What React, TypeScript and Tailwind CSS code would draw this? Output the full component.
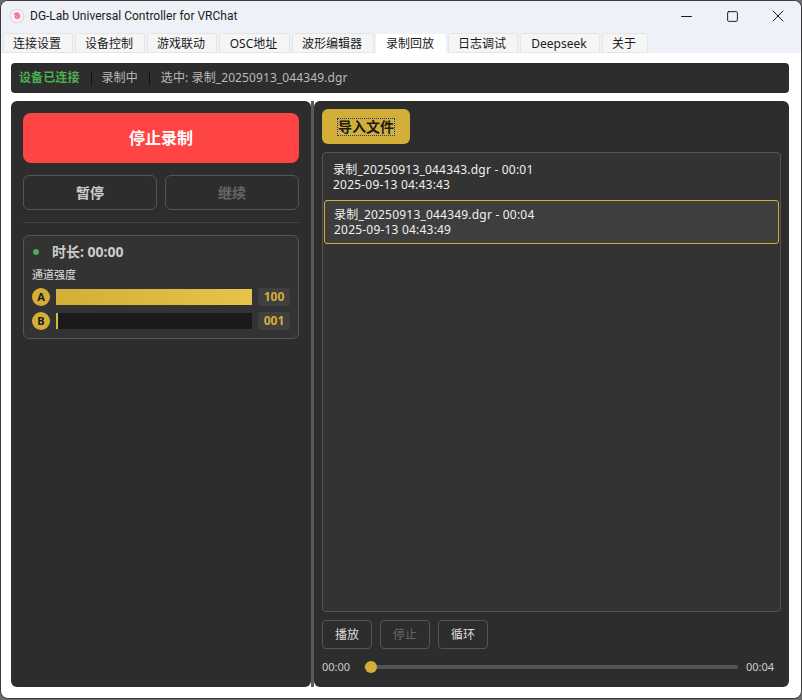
import { Minus, Square, X } from "lucide-react";

const tabs = [
  { label: "连接设置", width: "w-[70px]" },
  { label: "设备控制", width: "w-[70px]" },
  { label: "游戏联动", width: "w-[70px]" },
  { label: "OSC地址", width: "w-[71px]" },
  { label: "波形编辑器", width: "w-[82px]" },
  { label: "录制回放", width: "w-[70px]", active: true },
  { label: "日志调试", width: "w-[70px]" },
  { label: "Deepseek", width: "w-[80px]" },
  { label: "关于", width: "w-[46px]" },
];

function AppIcon() {
  return (
    <svg width="16" height="16" viewBox="0 0 16 16" fill="none">
      <circle cx="8" cy="8" r="7.5" fill="#dcdcde" />
      <circle cx="8" cy="8" r="6.2" fill="#fdeef4" />
      <path
        d="M8.4 8.3c.5-.9-.6-1.6-1.4-1-1.1.8-.7 2.6.7 2.9 1.8.4 3.2-1.3 2.7-3-.6-2-3.3-2.7-4.9-1.2"
        stroke="#ee5f9e"
        strokeWidth="1.5"
        strokeLinecap="round"
      />
    </svg>
  );
}

function Channel({ name, value, percent }: { name: string; value: string; percent: number }) {
  return (
    <div className="flex h-[18px] items-center">
      <div className="flex size-[18px] items-center justify-center rounded-full bg-[#d4af37] text-[11px] font-bold text-[#1a1a1a]">
        {name}
      </div>
      <div className="ml-[6px] h-4 w-[196px] bg-[#1a1a1a]">
        <div
          className="h-full bg-gradient-to-r from-[#d4af37] to-[#e6c34a]"
          style={{ width: `${percent}%` }}
        />
      </div>
      <div className="ml-[6px] flex h-[18px] w-[32px] items-center justify-center rounded-[3px] bg-[#3f3f3f] text-[12px] font-bold text-[#d4af37]">
        {value}
      </div>
    </div>
  );
}

function SmallButton({ label, disabled }: { label: string; disabled?: boolean }) {
  return (
    <div
      className={`flex h-[29px] w-[50px] items-center justify-center rounded-[4px] border border-[#555555] text-[12px] ${
        disabled ? "text-[#666666]" : "text-[#dddddd]"
      }`}
    >
      {label}
    </div>
  );
}

function Recording({ title, date, selected }: { title: string; date: string; selected?: boolean }) {
  return (
    <div
      className={
        selected
          ? "mx-[1px] mt-[1px] flex h-[44px] flex-col justify-center rounded-[3px] border border-[#d4af37] bg-[#3e3e3e] pl-[9px] text-[12px] leading-[15px] tracking-[0.2px] text-[#f0f0f0]"
          : "mx-[1px] mt-[1px] flex h-[44px] flex-col justify-center pl-[9px] text-[12px] leading-[15px] tracking-[0.2px] text-[#f0f0f0]"
      }
    >
      <div>{title}</div>
      <div>{date}</div>
    </div>
  );
}

export default function App() {
  return (
    <div className="h-[700px] w-[802px] overflow-hidden bg-[#6b6b6b] text-[12px] [font-family:'Noto_Sans','Noto_Sans_CJK_SC',sans-serif]">
      <div className="flex h-[699px] flex-col overflow-hidden rounded-[8px] border border-[#3a3a3a] bg-white">
        {/* title bar */}
        <div className="flex h-[30px] shrink-0 items-center bg-[#eef2f8] pl-[8px]">
          <AppIcon />
          <span className="ml-[5px] text-[12px] text-[#1a1a1a] [font-family:Roboto,sans-serif]">
            DG-Lab Universal Controller for VRChat
          </span>
          <div className="ml-auto flex items-center text-[#1a1a1a]">
            <div className="flex w-[46px] justify-center">
              <Minus size={17} strokeWidth={1.4} />
            </div>
            <div className="flex w-[46px] justify-center">
              <Square size={13} strokeWidth={1.8} />
            </div>
            <div className="flex w-[46px] justify-center">
              <X size={20} strokeWidth={1.2} />
            </div>
          </div>
        </div>

        {/* tabs */}
        <div className="flex h-[22px] shrink-0 items-end gap-[2px] bg-[#eef2f8] pl-[2px]">
          {tabs.map((tab) => (
            <div
              key={tab.label}
              className={`flex items-center justify-center rounded-t-[2px] pt-[1px] pr-[2px] text-[12px] text-[#1a1a1a] ${tab.width} ${
                tab.active ? "h-[19px] bg-white" : "h-[20px] border border-[#e5e5e5] bg-[#f5f5f5]"
              }`}
            >
              {tab.label}
            </div>
          ))}
        </div>

        {/* body */}
        <div className="flex min-h-0 flex-1 flex-col pt-[10px] pr-[12px] pb-[11px] pl-[10px]">
          <div className="flex h-[30px] shrink-0 items-center rounded-[4px] bg-[#2d2d2d] pl-[8px] text-[12px] tracking-[0.1px] text-[#bbbbbb]">
            <span className="font-bold text-[#4caf50]">设备已连接</span>
            <span className="mr-[10px] ml-[11px] h-[13px] w-px bg-[#111111]" />
            <span>录制中</span>
            <span className="mx-[11px] h-[13px] w-px bg-[#111111]" />
            <span>选中: 录制_20250913_044349.dgr</span>
          </div>

          <div className="mt-[8px] flex min-h-0 flex-1">
            {/* left panel */}
            <div className="flex w-[300px] shrink-0 flex-col rounded-[6px] bg-[#2d2d2d] px-[12px] pt-[12px]">
              <div className="flex h-[50px] items-center justify-center rounded-[8px] bg-[#ff4444] text-[16px] font-bold text-white">
                停止录制
              </div>
              <div className="mt-[12px] flex gap-[8px]">
                <div className="flex h-[35px] flex-1 items-center justify-center rounded-[6px] border border-[#555555] text-[14px] font-bold text-[#cccccc]">
                  暂停
                </div>
                <div className="flex h-[35px] flex-1 items-center justify-center rounded-[6px] border border-[#555555] text-[14px] font-bold text-[#666666]">
                  继续
                </div>
              </div>
              <div className="mt-[12px] h-px bg-[#444444]" />
              <div className="mt-[12px] h-[104px] rounded-[6px] border border-[#555555] bg-[#333333] px-[8px]">
                <div className="flex h-[31px] items-center">
                  <span className="ml-[1px] size-[6px] rounded-full bg-[#4caf50]" />
                  <span className="ml-[13px] text-[14px] font-bold text-[#cccccc]">时长: 00:00</span>
                </div>
                <div className="mt-[1px] text-[11px] leading-[14px] font-medium text-[#cccccc]">通道强度</div>
                <div className="mt-[6px] flex flex-col gap-[6px]">
                  <Channel name="A" value="100" percent={100} />
                  <Channel name="B" value="001" percent={1} />
                </div>
              </div>
            </div>

            {/* splitter */}
            <div className="w-[3px] shrink-0 bg-[#5a5a5a]" />

            {/* right panel */}
            <div className="flex min-w-0 flex-1 flex-col rounded-[6px] bg-[#2d2d2d] px-[8px] pt-[8px]">
              <div className="flex h-[35px] w-[88px] items-center justify-center rounded-[6px] bg-[#d4af37] text-[14px] font-bold text-[#1a1a1a]">
                <span className="leading-[16px] outline-1 outline-[#2030a0] outline-dotted">导入文件</span>
              </div>
              <div className="mt-[8px] flex min-h-0 flex-1 flex-col rounded-[4px] border border-[#555555] bg-[#333333] pt-[1px]">
                <Recording title="录制_20250913_044343.dgr - 00:01" date="2025-09-13 04:43:43" />
                <Recording title="录制_20250913_044349.dgr - 00:04" date="2025-09-13 04:43:49" selected />
              </div>
              <div className="mt-[8px] flex gap-[8px]">
                <SmallButton label="播放" />
                <SmallButton label="停止" disabled />
                <SmallButton label="循环" />
              </div>
              <div className="mt-[10px] mb-[12px] flex h-[16px] items-center text-[11px] text-[#cccccc]">
                <span className="w-[36px]">00:00</span>
                <div className="relative ml-[6px] h-[4px] w-[374px] rounded-full bg-[#555555]">
                  <div className="absolute top-[-4px] left-[1px] size-[12px] rounded-full bg-[#d4af37]" />
                </div>
                <span className="ml-[8px]">00:04</span>
              </div>
            </div>
          </div>
        </div>
      </div>
    </div>
  );
}
